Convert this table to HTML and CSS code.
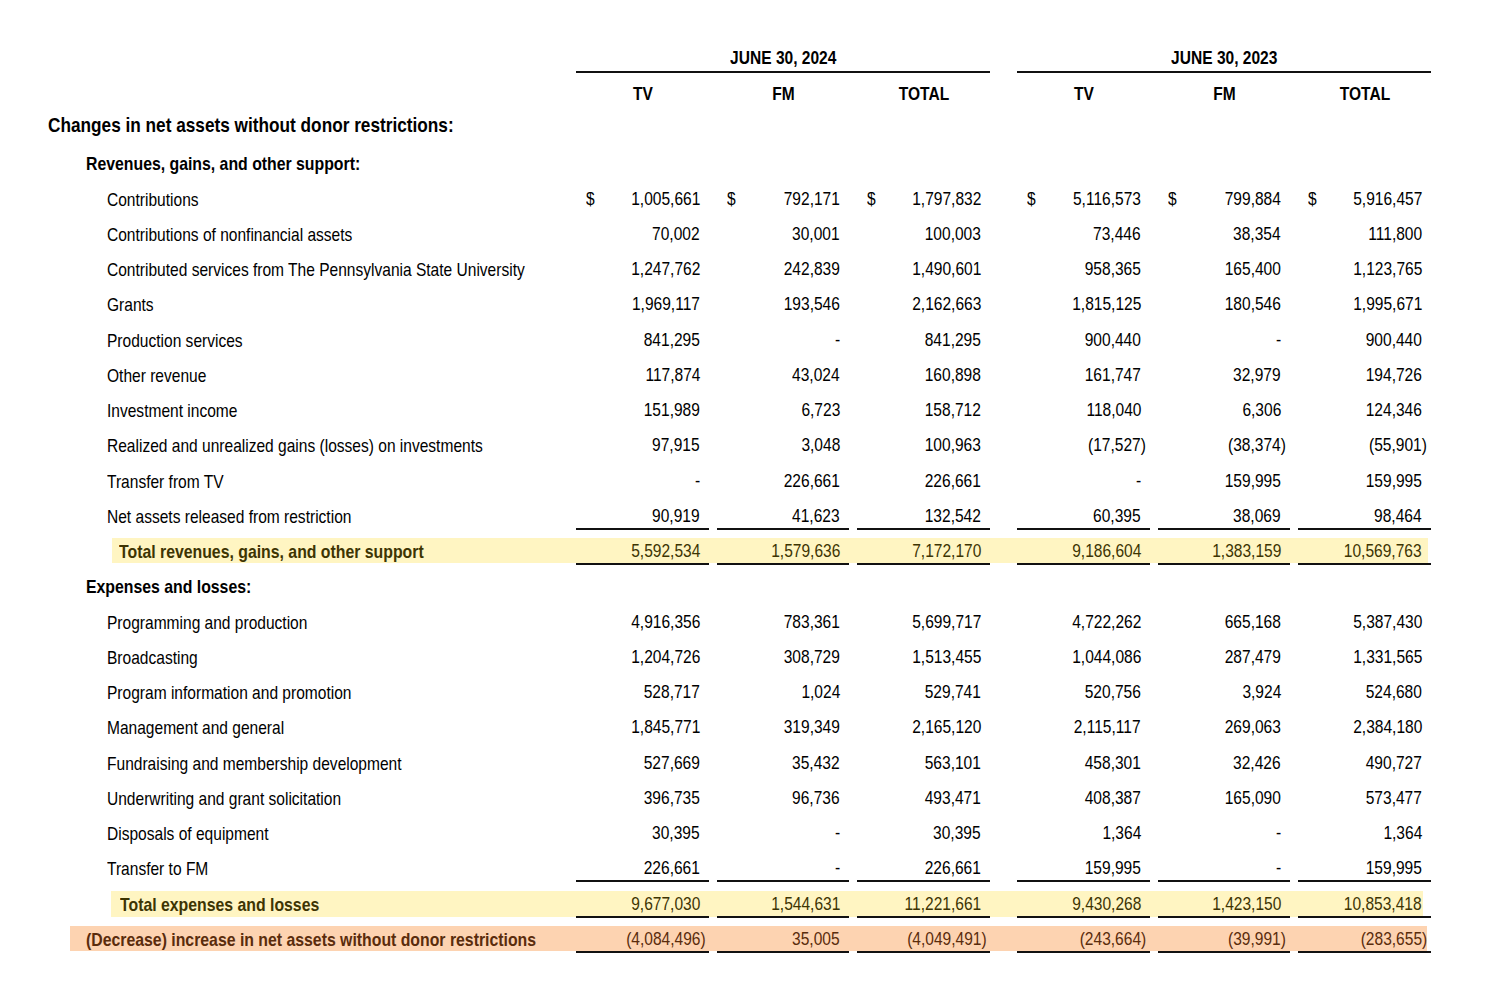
FILE: index.html
```html
<!DOCTYPE html>
<html lang="en">
<head>
<meta charset="utf-8">
<title>Statement of Activities</title>
<link rel="stylesheet" href="styles.css">
</head>
<body>
<div class="page">
  <div class="row head-groups">
    <div class="label"></div>
    <div class="group g1"><span class="t">JUNE 30, 2024</span></div>
    <div class="group g2"><span class="t">JUNE 30, 2023</span></div>
  </div>
  <div class="row head-cols">
    <div class="label"></div>
    <div class="ch c1"><span class="t">TV</span></div><div class="ch c2"><span class="t">FM</span></div><div class="ch c3"><span class="t">TOTAL</span></div>
    <div class="ch c4"><span class="t">TV</span></div><div class="ch c5"><span class="t">FM</span></div><div class="ch c6"><span class="t">TOTAL</span></div>
  </div>

  <div class="row section"><div class="label l0 b big"><span class="t">Changes in net assets without donor restrictions:</span></div></div>
  <div class="row"><div class="label l1 b"><span class="t">Revenues, gains, and other support:</span></div></div>

  <div class="row">
    <div class="label l2"><span class="t">Contributions</span></div>
    <div class="num c1"><span class="t d">$</span><span class="t">1,005,661</span></div>
    <div class="num c2"><span class="t d">$</span><span class="t">792,171</span></div>
    <div class="num c3"><span class="t d">$</span><span class="t">1,797,832</span></div>
    <div class="num c4"><span class="t d">$</span><span class="t">5,116,573</span></div>
    <div class="num c5"><span class="t d">$</span><span class="t">799,884</span></div>
    <div class="num c6"><span class="t d">$</span><span class="t">5,916,457</span></div>
  </div>
  <div class="row">
    <div class="label l2"><span class="t">Contributions of nonfinancial assets</span></div>
    <div class="num c1"><span class="t">70,002</span></div><div class="num c2"><span class="t">30,001</span></div><div class="num c3"><span class="t">100,003</span></div>
    <div class="num c4"><span class="t">73,446</span></div><div class="num c5"><span class="t">38,354</span></div><div class="num c6"><span class="t">111,800</span></div>
  </div>
  <div class="row">
    <div class="label l2"><span class="t">Contributed services from The Pennsylvania State University</span></div>
    <div class="num c1"><span class="t">1,247,762</span></div><div class="num c2"><span class="t">242,839</span></div><div class="num c3"><span class="t">1,490,601</span></div>
    <div class="num c4"><span class="t">958,365</span></div><div class="num c5"><span class="t">165,400</span></div><div class="num c6"><span class="t">1,123,765</span></div>
  </div>
  <div class="row">
    <div class="label l2"><span class="t">Grants</span></div>
    <div class="num c1"><span class="t">1,969,117</span></div><div class="num c2"><span class="t">193,546</span></div><div class="num c3"><span class="t">2,162,663</span></div>
    <div class="num c4"><span class="t">1,815,125</span></div><div class="num c5"><span class="t">180,546</span></div><div class="num c6"><span class="t">1,995,671</span></div>
  </div>
  <div class="row">
    <div class="label l2"><span class="t">Production services</span></div>
    <div class="num c1"><span class="t">841,295</span></div><div class="num c2"><span class="t">-</span></div><div class="num c3"><span class="t">841,295</span></div>
    <div class="num c4"><span class="t">900,440</span></div><div class="num c5"><span class="t">-</span></div><div class="num c6"><span class="t">900,440</span></div>
  </div>
  <div class="row">
    <div class="label l2"><span class="t">Other revenue</span></div>
    <div class="num c1"><span class="t">117,874</span></div><div class="num c2"><span class="t">43,024</span></div><div class="num c3"><span class="t">160,898</span></div>
    <div class="num c4"><span class="t">161,747</span></div><div class="num c5"><span class="t">32,979</span></div><div class="num c6"><span class="t">194,726</span></div>
  </div>
  <div class="row">
    <div class="label l2"><span class="t">Investment income</span></div>
    <div class="num c1"><span class="t">151,989</span></div><div class="num c2"><span class="t">6,723</span></div><div class="num c3"><span class="t">158,712</span></div>
    <div class="num c4"><span class="t">118,040</span></div><div class="num c5"><span class="t">6,306</span></div><div class="num c6"><span class="t">124,346</span></div>
  </div>
  <div class="row">
    <div class="label l2"><span class="t">Realized and unrealized gains (losses) on investments</span></div>
    <div class="num c1"><span class="t">97,915</span></div><div class="num c2"><span class="t">3,048</span></div><div class="num c3"><span class="t">100,963</span></div>
    <div class="num c4"><span class="t">(17,527<span class="cp">)</span></span></div><div class="num c5"><span class="t">(38,374<span class="cp">)</span></span></div><div class="num c6"><span class="t">(55,901<span class="cp">)</span></span></div>
  </div>
  <div class="row">
    <div class="label l2"><span class="t">Transfer from TV</span></div>
    <div class="num c1"><span class="t">-</span></div><div class="num c2"><span class="t">226,661</span></div><div class="num c3"><span class="t">226,661</span></div>
    <div class="num c4"><span class="t">-</span></div><div class="num c5"><span class="t">159,995</span></div><div class="num c6"><span class="t">159,995</span></div>
  </div>
  <div class="row">
    <div class="label l2"><span class="t">Net assets released from restriction</span></div>
    <div class="num u c1"><span class="t">90,919</span></div><div class="num u c2"><span class="t">41,623</span></div><div class="num u c3"><span class="t">132,542</span></div>
    <div class="num u c4"><span class="t">60,395</span></div><div class="num u c5"><span class="t">38,069</span></div><div class="num u c6"><span class="t">98,464</span></div>
  </div>
  <div class="row total hl-rev">
    <div class="label l3 b"><span class="t">Total revenues, gains, and other support</span></div>
    <div class="num u c1"><span class="t">5,592,534</span></div><div class="num u c2"><span class="t">1,579,636</span></div><div class="num u c3"><span class="t">7,172,170</span></div>
    <div class="num u c4"><span class="t">9,186,604</span></div><div class="num u c5"><span class="t">1,383,159</span></div><div class="num u c6"><span class="t">10,569,763</span></div>
  </div>

  <div class="row"><div class="label l1 b"><span class="t">Expenses and losses:</span></div></div>
  <div class="row">
    <div class="label l2"><span class="t">Programming and production</span></div>
    <div class="num c1"><span class="t">4,916,356</span></div><div class="num c2"><span class="t">783,361</span></div><div class="num c3"><span class="t">5,699,717</span></div>
    <div class="num c4"><span class="t">4,722,262</span></div><div class="num c5"><span class="t">665,168</span></div><div class="num c6"><span class="t">5,387,430</span></div>
  </div>
  <div class="row">
    <div class="label l2"><span class="t">Broadcasting</span></div>
    <div class="num c1"><span class="t">1,204,726</span></div><div class="num c2"><span class="t">308,729</span></div><div class="num c3"><span class="t">1,513,455</span></div>
    <div class="num c4"><span class="t">1,044,086</span></div><div class="num c5"><span class="t">287,479</span></div><div class="num c6"><span class="t">1,331,565</span></div>
  </div>
  <div class="row">
    <div class="label l2"><span class="t">Program information and promotion</span></div>
    <div class="num c1"><span class="t">528,717</span></div><div class="num c2"><span class="t">1,024</span></div><div class="num c3"><span class="t">529,741</span></div>
    <div class="num c4"><span class="t">520,756</span></div><div class="num c5"><span class="t">3,924</span></div><div class="num c6"><span class="t">524,680</span></div>
  </div>
  <div class="row">
    <div class="label l2"><span class="t">Management and general</span></div>
    <div class="num c1"><span class="t">1,845,771</span></div><div class="num c2"><span class="t">319,349</span></div><div class="num c3"><span class="t">2,165,120</span></div>
    <div class="num c4"><span class="t">2,115,117</span></div><div class="num c5"><span class="t">269,063</span></div><div class="num c6"><span class="t">2,384,180</span></div>
  </div>
  <div class="row">
    <div class="label l2"><span class="t">Fundraising and membership development</span></div>
    <div class="num c1"><span class="t">527,669</span></div><div class="num c2"><span class="t">35,432</span></div><div class="num c3"><span class="t">563,101</span></div>
    <div class="num c4"><span class="t">458,301</span></div><div class="num c5"><span class="t">32,426</span></div><div class="num c6"><span class="t">490,727</span></div>
  </div>
  <div class="row">
    <div class="label l2"><span class="t">Underwriting and grant solicitation</span></div>
    <div class="num c1"><span class="t">396,735</span></div><div class="num c2"><span class="t">96,736</span></div><div class="num c3"><span class="t">493,471</span></div>
    <div class="num c4"><span class="t">408,387</span></div><div class="num c5"><span class="t">165,090</span></div><div class="num c6"><span class="t">573,477</span></div>
  </div>
  <div class="row">
    <div class="label l2"><span class="t">Disposals of equipment</span></div>
    <div class="num c1"><span class="t">30,395</span></div><div class="num c2"><span class="t">-</span></div><div class="num c3"><span class="t">30,395</span></div>
    <div class="num c4"><span class="t">1,364</span></div><div class="num c5"><span class="t">-</span></div><div class="num c6"><span class="t">1,364</span></div>
  </div>
  <div class="row">
    <div class="label l2"><span class="t">Transfer to FM</span></div>
    <div class="num u c1"><span class="t">226,661</span></div><div class="num u c2"><span class="t">-</span></div><div class="num u c3"><span class="t">226,661</span></div>
    <div class="num u c4"><span class="t">159,995</span></div><div class="num u c5"><span class="t">-</span></div><div class="num u c6"><span class="t">159,995</span></div>
  </div>
  <div class="row total hl-exp">
    <div class="label l3b b"><span class="t">Total expenses and losses</span></div>
    <div class="num u c1"><span class="t">9,677,030</span></div><div class="num u c2"><span class="t">1,544,631</span></div><div class="num u c3"><span class="t">11,221,661</span></div>
    <div class="num u c4"><span class="t">9,430,268</span></div><div class="num u c5"><span class="t">1,423,150</span></div><div class="num u c6"><span class="t">10,853,418</span></div>
  </div>
  <div class="row net hl-net">
    <div class="label l1 b"><span class="t">(Decrease) increase in net assets without donor restrictions</span></div>
    <div class="num u c1"><span class="t">(4,084,496<span class="cp">)</span></span></div><div class="num u c2"><span class="t">35,005</span></div><div class="num u c3"><span class="t">(4,049,491<span class="cp">)</span></span></div>
    <div class="num u c4"><span class="t">(243,664<span class="cp">)</span></span></div><div class="num u c5"><span class="t">(39,991<span class="cp">)</span></span></div><div class="num u c6"><span class="t">(283,655<span class="cp">)</span></span></div>
  </div>
</div>
</body>
</html>
```

FILE: styles.css
```css
html, body {
  margin: 0;
  padding: 0;
  background: #ffffff;
}

body {
  font-family: "Liberation Sans", Arial, sans-serif;
  font-size: 18.5px;
  color: #000;
}

/* Text is set in a narrow sans: each run is compressed horizontally. */
.t {
  display: inline-block;
  white-space: nowrap;
  transform: scaleX(0.84);
}

.page {
  padding: 45px 0 0 48px;
  width: 1383px;
}

.row {
  display: grid;
  grid-template-columns: 520px 133px 132px 133px 11px 133px 132px 133px;
  column-gap: 8px;
  align-items: center;
  height: 35.25px;
}

.c1 { grid-column: 2; }
.c2 { grid-column: 3; }
.c3 { grid-column: 4; }
.c4 { grid-column: 6; }
.c5 { grid-column: 7; }
.c6 { grid-column: 8; }

.head-groups {
  height: auto;
  align-items: end;
}

.group {
  font-weight: bold;
  text-align: center;
  line-height: 26px;
  border-bottom: 2px solid #111;
}
.g1 { grid-column: 2 / 5; }
.g2 { grid-column: 6 / 9; }

.head-cols {
  height: 27.4px;
  padding-top: 7px;
}

.ch {
  font-weight: bold;
  text-align: center;
  line-height: 27.4px;
}

.group .t, .ch .t {
  transform-origin: 50% 50%;
}

.section {
  margin-bottom: 4px;
}

.label {
  grid-column: 1;
  white-space: nowrap;
  line-height: 24px;
  overflow: visible;
}
.label .t {
  transform-origin: 0 50%;
}
.label.b .t {
  transform: scaleX(0.855);
}
.label.big {
  font-size: 20.5px;
}
.label.big .t {
  transform: scaleX(0.84);
}

.b { font-weight: bold; }
.l0 { padding-left: 0; }
.l1 { padding-left: 38px; }
.l2 { padding-left: 59px; }
.l3 { padding-left: 71px; }
.l3b { padding-left: 72px; }

.num {
  height: 26px;
  box-sizing: border-box;
  line-height: 24px;
  padding: 0 9px 0 10px;
  display: flex;
  justify-content: flex-end;
  white-space: nowrap;
}
.num .t {
  transform-origin: 100% 50%;
}
.num .t.d {
  transform-origin: 0 50%;
  margin-right: auto;
}

.num.u {
  border-bottom: 2px solid #111;
}

.cp {
  margin-right: -0.333em;
}

.total, .net {
  background-repeat: no-repeat;
}

.hl-rev {
  color: #3d3402;
  background-image: linear-gradient(#fff5c2, #fff5c2);
  background-size: 1316px 25px;
  background-position: 64px 4px;
}

.hl-exp {
  color: #3d3402;
  background-image: linear-gradient(#fff5c2, #fff5c2);
  background-size: 1312px 26px;
  background-position: 63px 4px;
}

.hl-net {
  color: #5a2c0c;
  background-image: linear-gradient(#fdd3b1, #fdd3b1);
  background-size: 1357px 25px;
  background-position: 22px 4px;
}
```
